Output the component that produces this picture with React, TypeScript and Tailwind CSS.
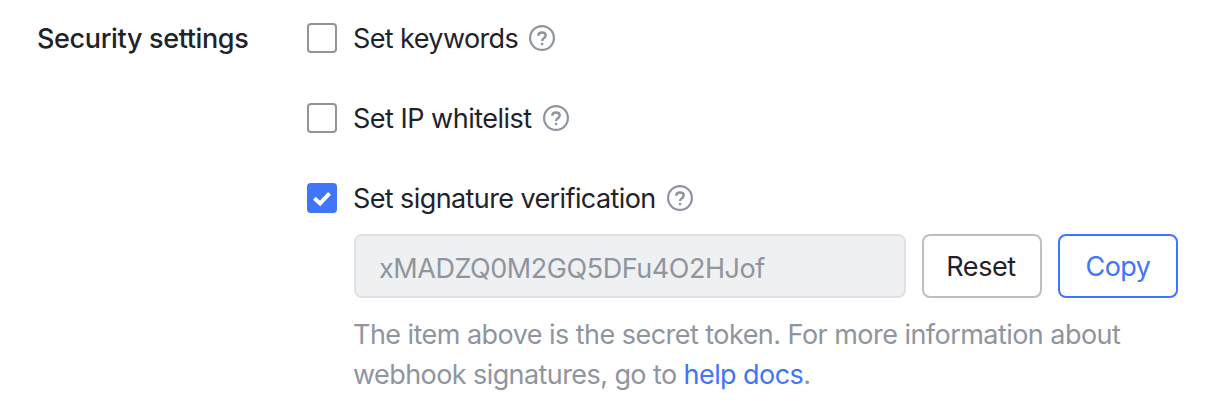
function Help() {
  return (
    <svg width="26" height="26" viewBox="0 0 26 26" fill="none" className="shrink-0">
      <circle cx="13" cy="13" r="11.9" stroke="#8f959e" strokeWidth="2.2" />
      <path d="M9.3 10.7C9.3 8.7 10.8 7.5 13 7.5s3.7 1.2 3.7 3c0 1.4-.9 2.1-1.9 2.7-1 .7-1.7 1.2-1.7 2.7" stroke="#8f959e" strokeWidth="2.4" />
      <rect x="11.9" y="17.8" width="2.4" height="2.4" rx=".6" fill="#8f959e" />
    </svg>
  );
}

function Option({ label, checked, labelClass }: { label: string; checked?: boolean; labelClass: string }) {
  return (
    <div className="flex h-10 items-center">
      <span className={checked ? 'flex size-[30px] items-center justify-center rounded-[4px] bg-[#3f75fb]' : 'size-[30px] rounded-[4px] border-2 border-[#8f959e]'}>
        {checked && (
          <svg width="30" height="30" viewBox="0 0 30 30" fill="none">
            <path d="M7.4 15.2l5.7 5.2 9.4-10" stroke="white" strokeWidth="3.9" />
          </svg>
        )}
      </span>
      <span className={`ml-4 whitespace-nowrap pt-0.5 ${labelClass}`}>{label}</span>
      <Help />
    </div>
  );
}

export default function App() {
  return (
    <main className="flex h-[414px] w-[1220px] bg-white pl-[37px] pt-[18px] font-[Inter,sans-serif] text-[27px] leading-10 text-[#1f2329]">
      <h2 className="w-[270px] shrink-0 pt-px font-medium tracking-[-0.36px]">Security settings</h2>
      <div>
        <div className="flex flex-col gap-10">
          <Option label="Set keywords" labelClass="w-[176px] tracking-[-0.6px]" />
          <Option label="Set IP whitelist" labelClass="w-[190px] tracking-[-0.5px]" />
          <Option label="Set signature verification" checked labelClass="w-[314px] tracking-[-0.6px]" />
        </div>
        <div className="ml-[47px] mt-4 flex gap-4">
          <div className="flex h-16 w-[552px] items-center rounded-lg border-2 border-[#dee0e3] bg-[#eff0f1] pl-[23px] pt-1.5 tracking-[-0.45px] text-[#8f959e]">xMADZQ0M2GQ5DFu4O2HJof</div>
          <button className="h-16 w-[120px] rounded-lg border-2 border-[#bbbfc4] pr-0.5 pt-0.5 tracking-[-0.4px]">Reset</button>
          <button className="h-16 w-[120px] rounded-lg border-2 border-[#3f75fb] pt-0.5 tracking-[-0.5px] text-[#3f75fb]">Copy</button>
        </div>
        <p className="ml-[46px] mt-[17px] whitespace-nowrap text-[#8f959e]">
          <span className="tracking-[-0.54px]">The item above is the secret token. For more information about</span><br />
          <span className="tracking-[-0.58px]">webhook signatures, go to <a className="text-[#3f75fb]">help docs</a>.</span>
        </p>
      </div>
    </main>
  );
}
